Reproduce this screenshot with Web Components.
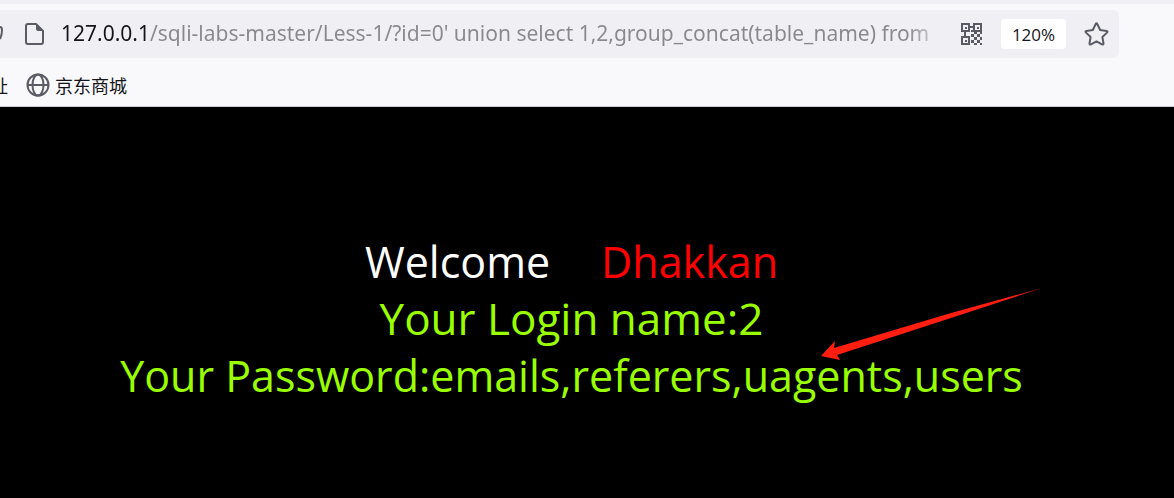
<!DOCTYPE html>
<html lang="en">
<head>
<meta charset="utf-8">
<title>Less-1</title>
<style>
html, body { height: 100%; }
body { margin: 0; background: #000; font-family: "Open Sans", "Noto Sans CJK SC", sans-serif; overflow: hidden; }
</style>
</head>
<body>
<browser-window>
  <url-bar slot="chrome" address="127.0.0.1/sqli-labs-master/Less-1/?id=0' union select 1,2,group_concat(table_name) from" zoom="120%"></url-bar>
  <bookmark-bar slot="chrome"></bookmark-bar>
  <lesson-page></lesson-page>
</browser-window>
<script>
class BrowserWindow extends HTMLElement {
  constructor() {
    super();
    this.attachShadow({ mode: "open" }).innerHTML = `
      <style>
        :host { display: flex; flex-direction: column; min-height: 100%; }
        header { background: #f9f9fb; border-top: 4px solid #f0f0f4; border-bottom: 1px solid #ccccd0; }
        main { flex: 1; background: #000; }
      </style>
      <header><slot name="chrome"></slot></header>
      <main><slot></slot></main>`;
  }
}
class UrlBar extends HTMLElement {
  constructor() {
    super();
    this.attachShadow({ mode: "open" }).innerHTML = `
      <style>
        :host { display: block; padding: 6px 55px 0 0; }
        .field { display: flex; align-items: center; height: 48px; background: #f0f0f4; border-radius: 0 6px 6px 0; color: #5b5b66; }
        svg { display: block; flex: none; }
        .page { margin: 0 17px 0 21px; }
        input { flex: 1; min-width: 0; border: 0; padding: 0 0 2px; outline: 0; height: 40px; font: 21px "Noto Sans", sans-serif;
          color: transparent; background: linear-gradient(90deg, #15141a 88px, #88888d 88px); -webkit-background-clip: text; background-clip: text;
          -webkit-mask-image: linear-gradient(270deg, transparent, #000 40px); mask-image: linear-gradient(270deg, transparent, #000 40px); }
        button { border: 0; padding: 0; background: none; color: inherit; flex: none; }
        .qr { margin-left: 12px; }
        .zoom { margin: 0 18px; width: 65px; height: 30px; background: #fff; border-radius: 4px; color: #15141a; font: 17px "Open Sans", sans-serif; }
        .star { margin-right: 10px; }
      </style>
      <div class="field">
        <svg width="4" height="24" viewBox="0 0 4 24" fill="none" stroke="currentColor" stroke-width="2"><path d="M0 5q2 0 2 3q0 5-2 9"/></svg>
        <svg class="page" width="19" height="22" viewBox="0 0 19 22"><path d="M3 1h8l7 7v11q0 2-2 2H3q-2 0-2-2V3q0-2 2-2z" fill="none" stroke="currentColor" stroke-width="2"/><path d="M11 1l7 7h-5q-2 0-2-2z" fill="currentColor"/></svg>
        <input aria-label="Address" spellcheck="false">
        <button class="qr" aria-label="QR code">
          <svg width="23" height="22" viewBox="0 0 23 22" fill="currentColor"><path fill-rule="evenodd" d="M1 0h9v9H1zM3 2v5h5V2zM13 0h9v9h-9zM15 2v5h5V2zM1 13h9v9H1zM3 15v5h5v-5z"/><path d="M5 4h2v2H5zM17 4h2v2h-2zM5 17h2v2H5zM10 3h3v2h-3zM4 9h2v4H4zM11 7h2v2h-2zM11 11h3v3h-3zM14 9h3v2h-3zM17 11h3v3h-3zM20 9h2v2h-2zM14 14h3v3h-3zM20 14h2v3h-2zM11 17h3v3h-3zM17 17h3v3h-3zM14 20h3v2h-3zM20 20h2v2h-2z"/></svg>
        </button>
        <button class="zoom"></button>
        <button class="star" aria-label="Bookmark this page">
          <svg width="25" height="24" viewBox="0 0 25 24" fill="none" stroke="currentColor" stroke-width="2" stroke-linejoin="round"><path d="M11.600 2.200q.9-1.700 1.800 0l2.800 5.800 6.300.9q1.800.4.5 1.700l-4.600 4.400 1.100 6.300q.1 1.800-1.500 1.100l-5.500-3-5.500 3q-1.600.7-1.500-1.100l1.100-6.300L2 10.600q-1.300-1.300.5-1.700l6.300-.9z"/></svg>
        </button>
      </div>`;
  }
  connectedCallback() {
    this.shadowRoot.querySelector("input").setAttribute("value", this.getAttribute("address"));
    this.shadowRoot.querySelector(".zoom").textContent = this.getAttribute("zoom");
  }
}
class BookmarkBar extends HTMLElement {
  constructor() {
    super();
    this.attachShadow({ mode: "open" }).innerHTML = `
      <style>
        :host { display: flex; align-items: center; height: 48px; padding-top: 5px; box-sizing: border-box; }
        a { display: flex; align-items: center; gap: 5px; color: #15141a; text-decoration: none; font: 18px/24px "Noto Sans CJK SC", sans-serif; }
        .cut { width: 8px; margin-right: 18px; overflow: hidden; justify-content: flex-end; white-space: nowrap; }
        svg { display: block; }
      </style>
      <a class="cut" href="#">址</a>
      <a href="#"><svg width="24" height="24" viewBox="0 0 24 24" fill="none" stroke="#5b5b66" stroke-width="2"><circle cx="12" cy="12" r="10.5"/><ellipse cx="12" cy="12" rx="5.5" ry="10.5"/><path d="M1.500 12h21"/></svg>京东商城</a>`;
  }
}
class LessonPage extends HTMLElement {
  constructor() {
    super();
    this.attachShadow({ mode: "open" }).innerHTML = `
      <style>
        :host { display: block; position: relative; padding: 126px 31px 0 0; text-align: center; font-size: 44px; line-height: 57px; color: #9f0; white-space: nowrap; }
        p { margin: 0; }
        .hello { display: flex; justify-content: center; gap: 51px; color: #fff; }
        .hello, .result { font-size: 43px; }
        .name { color: #f00; }
        svg { position: absolute; left: calc(50% + 234px); top: 180px; }
      </style>
      <p class="hello"><span>Welcome</span><span class="name">Dhakkan</span></p>
      <p>Your Login name:2</p>
      <p class="result">Your Password:emails,referers,uagents,users</p>
      <svg width="222" height="74" viewBox="0 0 222 74" fill="#ff1e10"><path d="M0 69L14 54L13 61L130 26L221 1L130 31L16 68L19 73z"/></svg>`;
  }
}
customElements.define("browser-window", BrowserWindow);
customElements.define("url-bar", UrlBar);
customElements.define("bookmark-bar", BookmarkBar);
customElements.define("lesson-page", LessonPage);
</script>
</body>
</html>
